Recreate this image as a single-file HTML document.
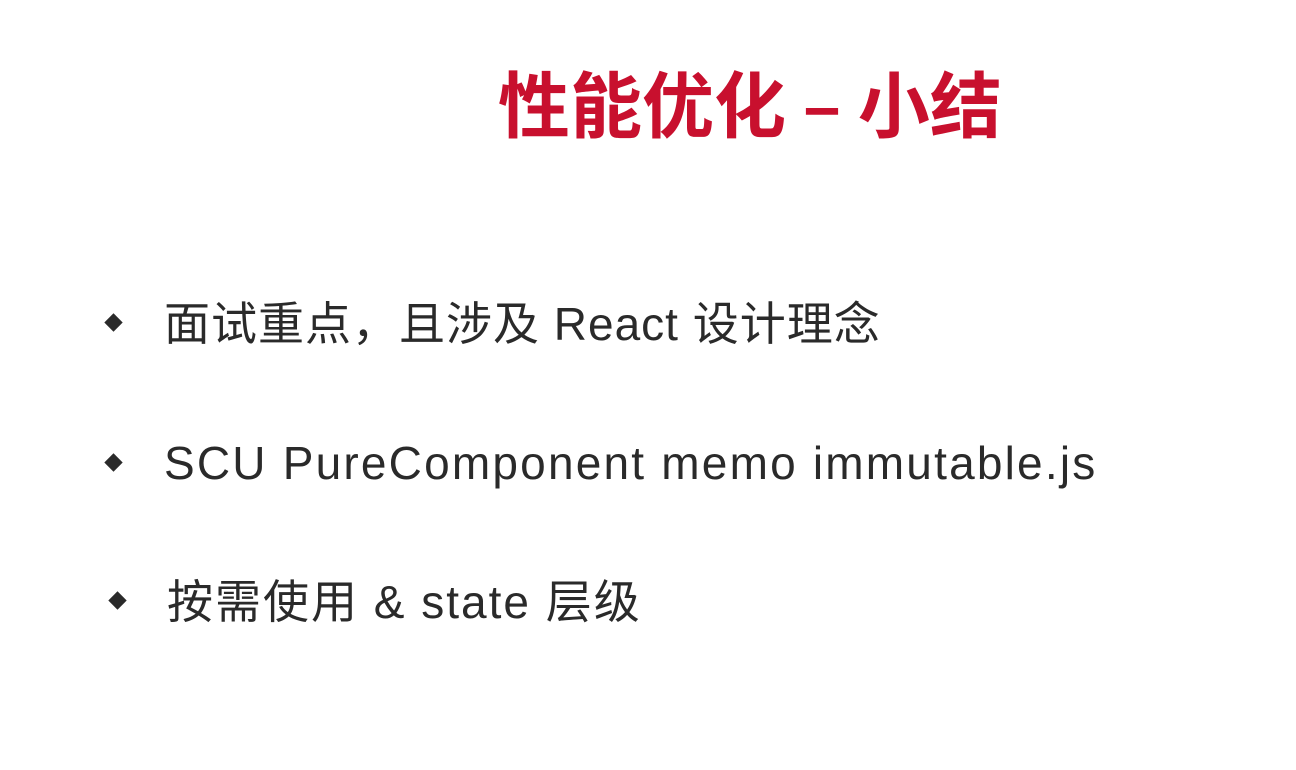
<!DOCTYPE html>
<html><head><meta charset="utf-8"><style>
html,body{margin:0;padding:0;background:#fff;}
body{width:1296px;height:770px;position:relative;overflow:hidden;font-family:"Liberation Sans","Noto Sans CJK SC",sans-serif;}
.t{position:absolute;left:498px;top:56px;font-size:72px;font-weight:bold;color:#c8102e;white-space:nowrap;line-height:90px;font-family:"Noto Sans CJK SC",sans-serif;}
.b{position:absolute;left:164px;font-size:46px;color:#2a2a2a;white-space:nowrap;line-height:60px;}
.d{position:absolute;width:13px;height:13px;background:#2a2a2a;transform:rotate(45deg);}
</style></head><body>
<div class="t">性能优化 – 小结</div>
<div class="d" style="left:107px;top:316px"></div>
<div class="b" style="top:294px;letter-spacing:1px">面试重点，且涉及 React 设计理念</div>
<div class="d" style="left:107px;top:456px"></div>
<div class="b" style="top:433px;letter-spacing:2.2px">SCU PureComponent memo immutable.js</div>
<div class="d" style="left:111px;top:594px"></div>
<div class="b" style="top:572px;left:167px;letter-spacing:2px">按需使用 &amp; state 层级</div>
</body></html>
